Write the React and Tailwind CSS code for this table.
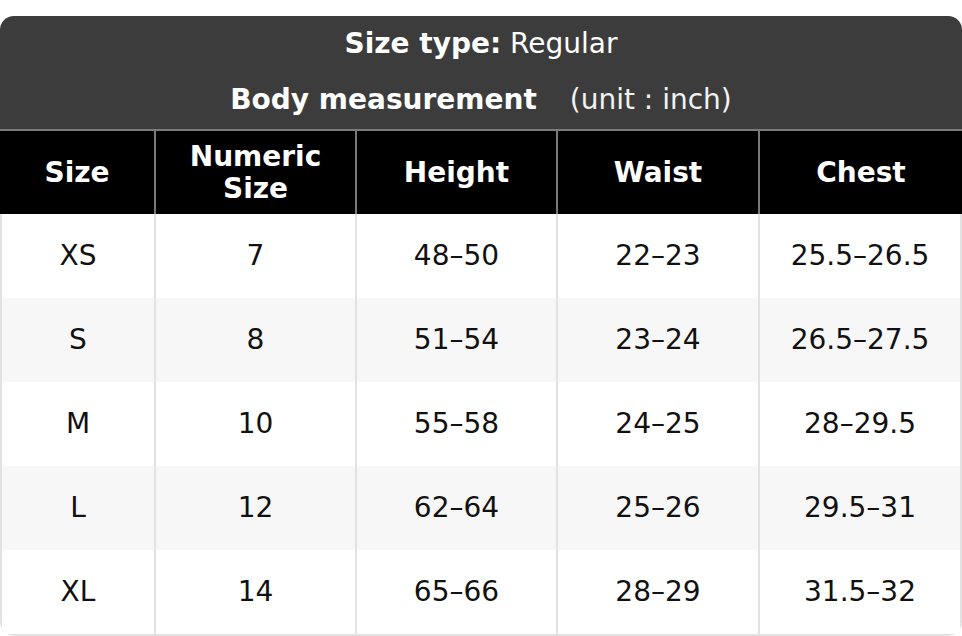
const columns = ["Size", "Numeric Size", "Height", "Waist", "Chest"];

const rows = [
	["XS", "7", "48–50", "22–23", "25.5–26.5"],
	["S", "8", "51–54", "23–24", "26.5–27.5"],
	["M", "10", "55–58", "24–25", "28–29.5"],
	["L", "12", "62–64", "25–26", "29.5–31"],
	["XL", "14", "65–66", "28–29", "31.5–32"],
];

const App = () => {
	return (
		<div className="bg-white pt-4 font-['DejaVu_Sans',sans-serif] text-[28px]">
			<div className="w-[962px] overflow-hidden rounded-t-[14px] rounded-b-[14px]">
				{/* Title band */}
				<div className="bg-[#3c3c3c] pt-[11px] pb-[12px] text-center text-white">
					<div className="leading-[34px]">
						<span className="font-bold">Size type:</span> Regular
					</div>
					<div className="mt-[22px] leading-[34px]">
						<span className="font-bold">Body measurement</span>
						<span className="ml-[33px] text-[#f2f2f2]">(unit : inch)</span>
					</div>
				</div>

				{/* Column headers */}
				<div className="grid grid-cols-[154px_201px_201px_202px_1fr] border-t-2 border-[#7a7a7a] bg-black text-white">
					{columns.map((col, i) => (
						<div
							key={col}
							className={`flex h-[83px] items-center justify-center px-6 text-center font-bold leading-[32px] ${
								i > 0 ? "border-l-2 border-[#7a7a7a]" : ""
							}`}
						>
							{col}
						</div>
					))}
				</div>

				{/* Body */}
				<div className="rounded-b-[14px] border-x-2 border-b-2 border-[#e2e2e2] text-[#111]">
					{rows.map((row, r) => (
						<div
							key={row[0]}
							className={`grid grid-cols-[152px_201px_201px_202px_1fr] ${
								r % 2 === 1 ? "bg-[#f7f7f7]" : "bg-white"
							}`}
						>
							{row.map((cell, i) => (
								<div
									key={i}
									className={`flex h-[84px] items-center justify-center ${
										i > 0 ? "border-l-2 border-[#e2e2e2]" : ""
									}`}
								>
									{cell}
								</div>
							))}
						</div>
					))}
				</div>
			</div>
		</div>
	);
};

export default App;
